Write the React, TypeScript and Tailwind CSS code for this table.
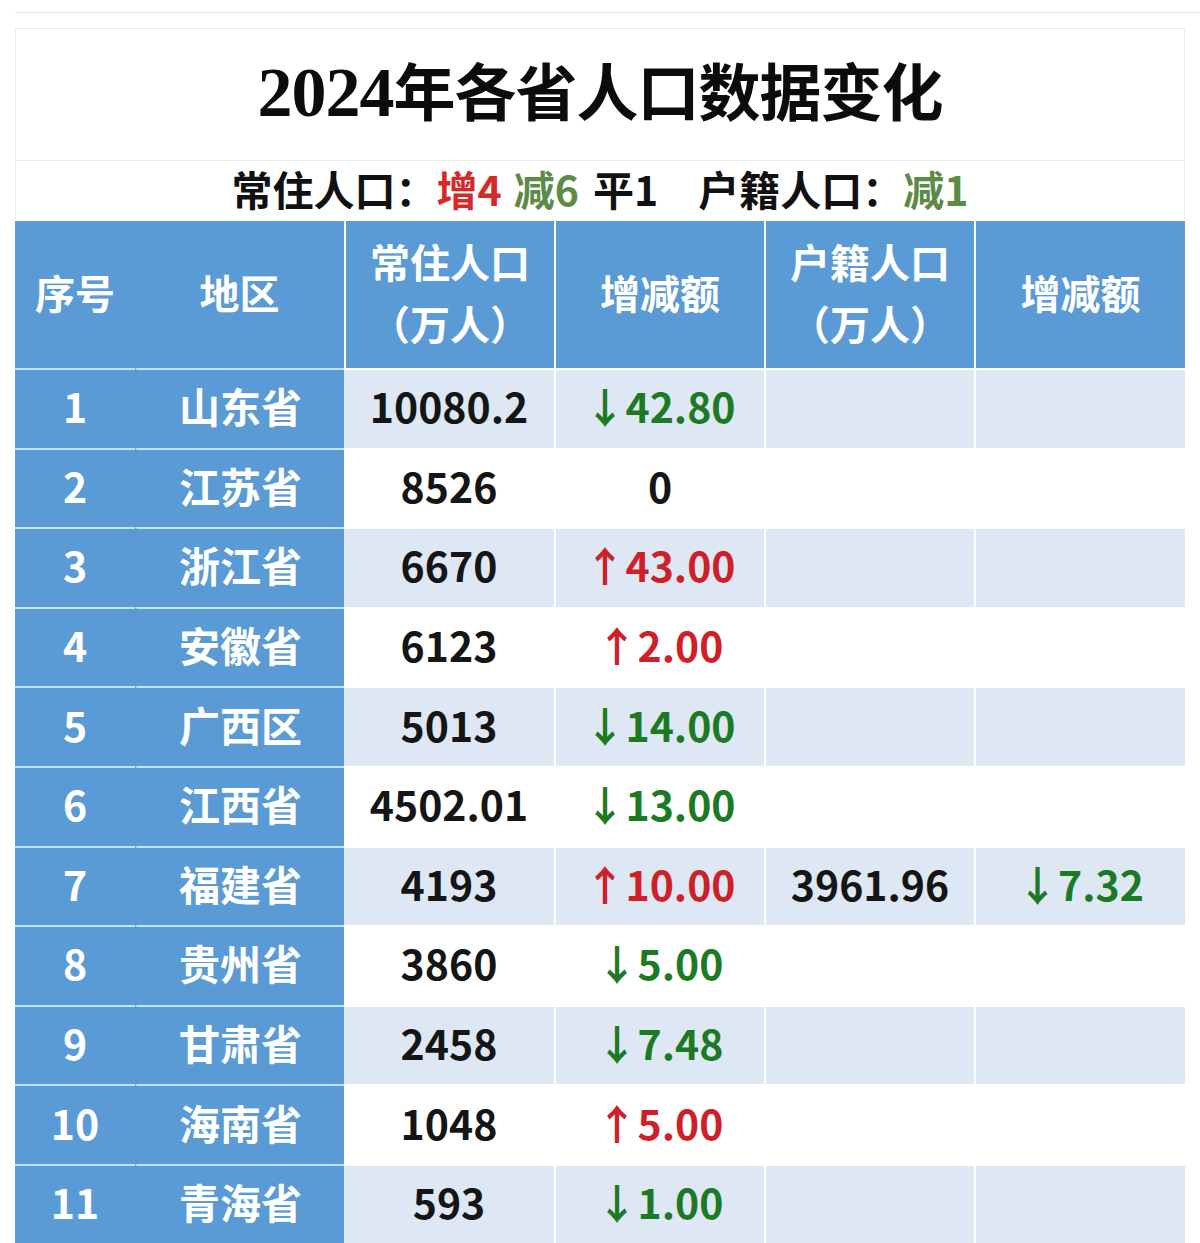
type Delta = { dir: "up" | "down" | "none"; value: string };

type Row = {
  no: number;
  region: string;
  resident: string;
  residentDelta: Delta;
  household?: string;
  householdDelta?: Delta;
};

const rows: Row[] = [
  { no: 1, region: "山东省", resident: "10080.2", residentDelta: { dir: "down", value: "42.80" } },
  { no: 2, region: "江苏省", resident: "8526", residentDelta: { dir: "none", value: "0" } },
  { no: 3, region: "浙江省", resident: "6670", residentDelta: { dir: "up", value: "43.00" } },
  { no: 4, region: "安徽省", resident: "6123", residentDelta: { dir: "up", value: "2.00" } },
  { no: 5, region: "广西区", resident: "5013", residentDelta: { dir: "down", value: "14.00" } },
  { no: 6, region: "江西省", resident: "4502.01", residentDelta: { dir: "down", value: "13.00" } },
  {
    no: 7,
    region: "福建省",
    resident: "4193",
    residentDelta: { dir: "up", value: "10.00" },
    household: "3961.96",
    householdDelta: { dir: "down", value: "7.32" },
  },
  { no: 8, region: "贵州省", resident: "3860", residentDelta: { dir: "down", value: "5.00" } },
  { no: 9, region: "甘肃省", resident: "2458", residentDelta: { dir: "down", value: "7.48" } },
  { no: 10, region: "海南省", resident: "1048", residentDelta: { dir: "up", value: "5.00" } },
  { no: 11, region: "青海省", resident: "593", residentDelta: { dir: "down", value: "1.00" } },
];

const gridCols = "grid grid-cols-[120px_209px_210px_210px_210px_211px]";

const DeltaText = ({ delta }: { delta?: Delta }) => {
  if (!delta) return null;
  if (delta.dir === "none") return <span className="text-[#151515]">{delta.value}</span>;
  const up = delta.dir === "up";
  return (
    <span className={up ? "text-[#cf1f28]" : "text-[#1d7a24]"}>
      {up ? "↑" : "↓"}
      {delta.value}
    </span>
  );
};

const App = () => {
  return (
    <div
      className="w-[1200px] h-[1243px] overflow-hidden bg-white"
      style={{ fontFamily: '"Noto Sans CJK SC", "Noto Sans", sans-serif' }}
    >
      <div className="ml-[15px] mt-[12px] h-px bg-[#e4e4e4]" />

      <div className="ml-[15px] mt-[15px] w-[1170px]">
        {/* title box */}
        <div className="border border-[#ececec] border-b-0">
          <div className="h-[132px] flex items-center justify-center border-b border-[#ececec] pb-[4px]">
            <h1
              className="font-bold text-[62px] leading-none text-[#0c0c0c] tracking-[-1px]"
              style={{ fontFamily: '"Liberation Serif", "Noto Sans CJK SC", serif' }}
            >
              <span className="text-[70px]">2024</span>年各省人口数据变化
            </h1>
          </div>
          <div className="h-[58px] flex items-center justify-center text-[41px] font-bold leading-none text-[#111] pb-[4px]">
            <span>常住人口：</span>
            <span className="text-[#d42a2a]">增4</span>
            <span className="ml-[12px] text-[#5c8b45]">减6</span>
            <span className="ml-[14px]">平1</span>
            <span className="ml-[40px]">户籍人口：</span>
            <span className="text-[#5c8b45]">减1</span>
          </div>
        </div>

        {/* table */}
        <div className="mt-[2px] font-bold">
          <div className={`${gridCols} h-[147px] bg-[#5b9bd5] text-white text-[40px]`}>
            <div className="flex items-center justify-center pb-[6px]">序号</div>
            <div className="flex items-center justify-center pb-[6px]">地区</div>
            <div className="flex flex-col items-center justify-center border-l-2 border-white leading-[62px] pb-[6px]">
              <span>常住人口</span>
              <span>（万人）</span>
            </div>
            <div className="flex items-center justify-center border-l-2 border-white pb-[6px]">增减额</div>
            <div className="flex flex-col items-center justify-center border-l-2 border-white leading-[62px] pb-[6px]">
              <span>户籍人口</span>
              <span>（万人）</span>
            </div>
            <div className="flex items-center justify-center border-l-2 border-white pb-[6px]">增减额</div>
          </div>

          {rows.map((r) => {
            const light = r.no % 2 === 1;
            const cellBg = light ? "bg-[#dde8f4]" : "bg-white";
            return (
              <div key={r.no} className={`${gridCols} h-[79.6px] text-[41px] leading-none`}>
                <div className="flex items-center justify-center pb-[6px] bg-[#5b9bd5] text-white border-t-2 border-[#bde5f7]">
                  {r.no}
                </div>
                <div className="flex items-center justify-center pb-[6px] bg-[#5b9bd5] text-white border-t-2 border-l-2 border-t-[#bde5f7] border-l-[#5b9bd5]">
                  {r.region}
                </div>
                <div className={`flex items-center justify-center pb-[6px] text-[#151515] border-t-2 border-white ${cellBg}`}>
                  {r.resident}
                </div>
                <div className={`flex items-center justify-center pb-[6px] border-t-2 border-l-2 border-white ${cellBg}`}>
                  <DeltaText delta={r.residentDelta} />
                </div>
                <div className={`flex items-center justify-center pb-[6px] text-[#151515] border-t-2 border-l-2 border-white ${cellBg}`}>
                  {r.household}
                </div>
                <div className={`flex items-center justify-center pb-[6px] border-t-2 border-l-2 border-white ${cellBg}`}>
                  <DeltaText delta={r.householdDelta} />
                </div>
              </div>
            );
          })}
        </div>
      </div>
    </div>
  );
};

export default App;
